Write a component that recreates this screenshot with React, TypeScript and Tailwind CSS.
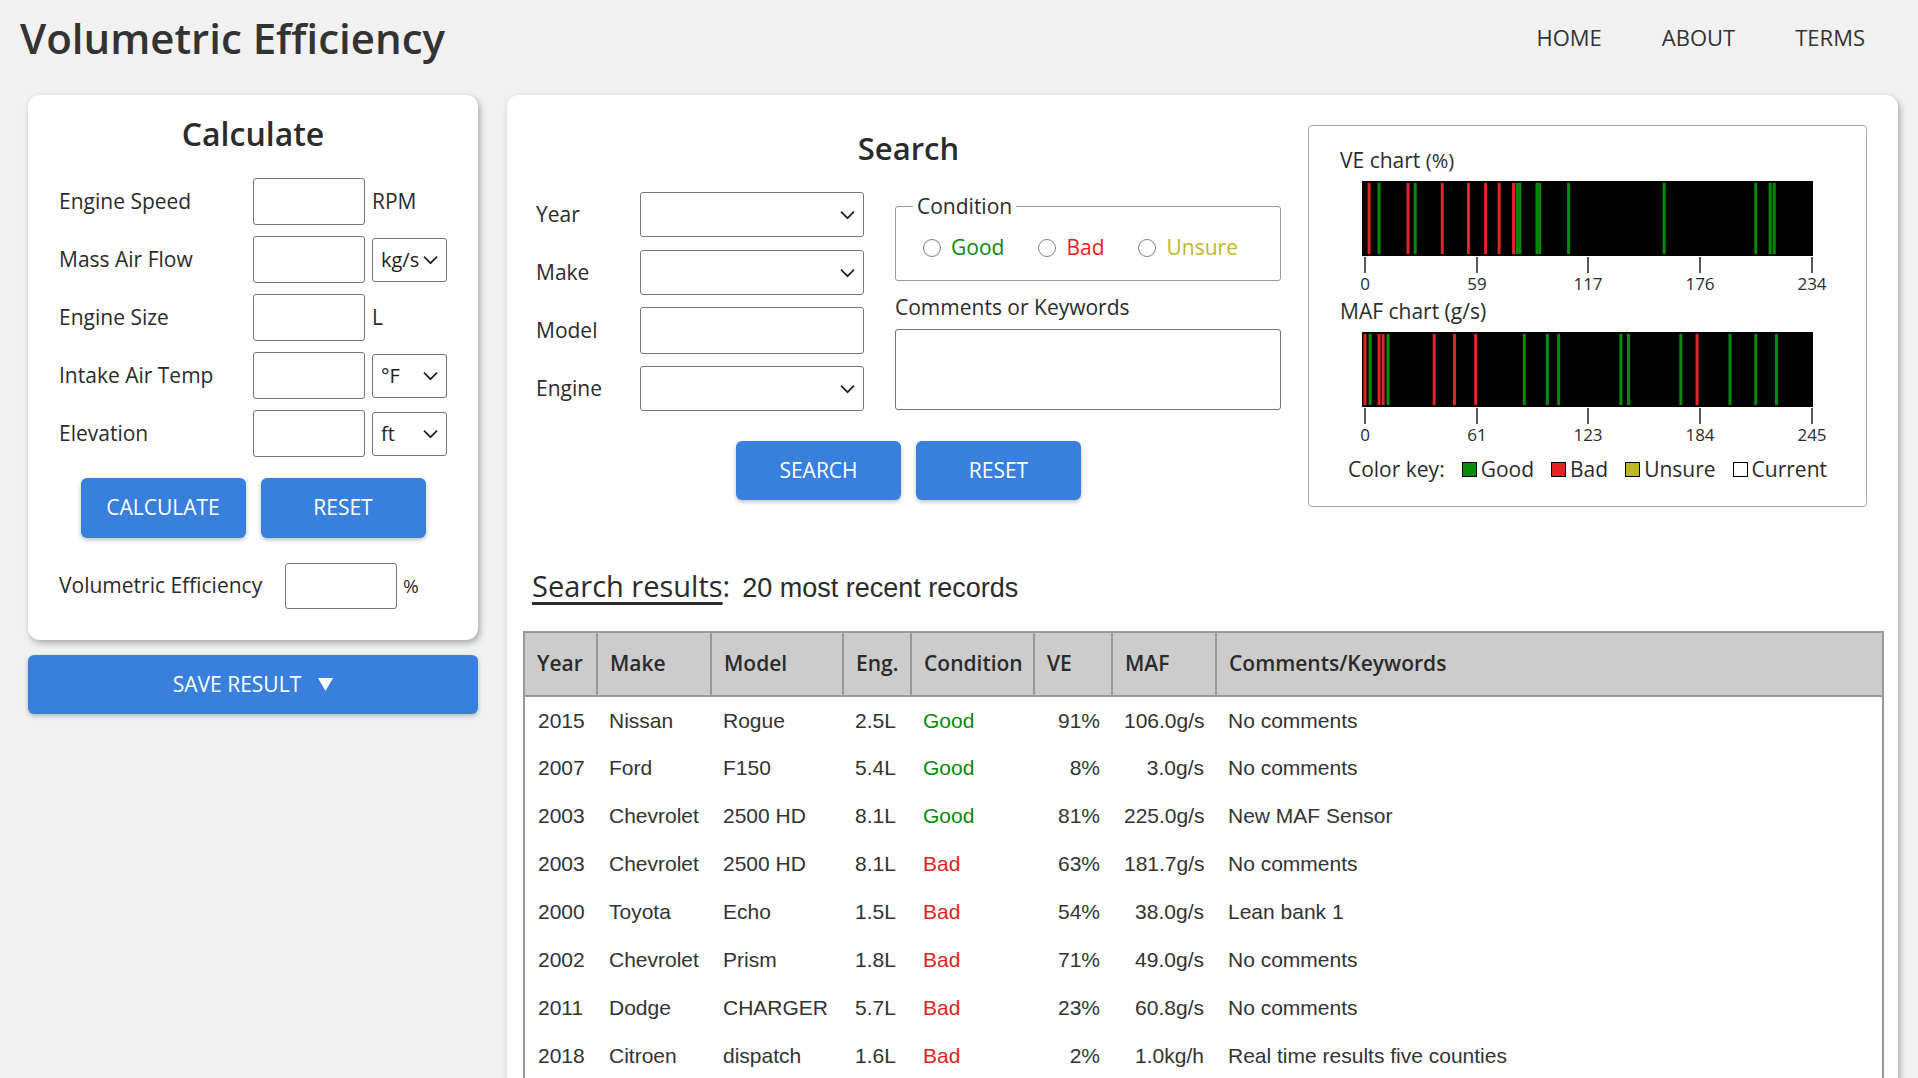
import React from "react";

const OS = "font-['Open_Sans',sans-serif]";
const AR = "font-['Liberation_Sans',Arial,sans-serif]";

const GREEN = "#0a8a0a";
const RED = "#e41e1e";

const rows = [
  ["2015", "Nissan", "Rogue", "2.5L", "Good", "91%", "106.0g/s", "No comments"],
  ["2007", "Ford", "F150", "5.4L", "Good", "8%", "3.0g/s", "No comments"],
  ["2003", "Chevrolet", "2500 HD", "8.1L", "Good", "81%", "225.0g/s", "New MAF Sensor"],
  ["2003", "Chevrolet", "2500 HD", "8.1L", "Bad", "63%", "181.7g/s", "No comments"],
  ["2000", "Toyota", "Echo", "1.5L", "Bad", "54%", "38.0g/s", "Lean bank 1"],
  ["2002", "Chevrolet", "Prism", "1.8L", "Bad", "71%", "49.0g/s", "No comments"],
  ["2011", "Dodge", "CHARGER", "5.7L", "Bad", "23%", "60.8g/s", "No comments"],
  ["2018", "Citroen", "dispatch", "1.6L", "Bad", "2%", "1.0kg/h", "Real time results five counties"],
];

type Bar = [number, "g" | "r"];

const veBars: Bar[] = [
  [0.0156, "r"], [0.0378, "g"], [0.102, "r"], [0.118, "g"], [0.178, "r"], [0.236, "r"],
  [0.274, "r"], [0.304, "r"], [0.336, "r"], [0.344, "g"], [0.35, "g"], [0.388, "g"],
  [0.394, "g"], [0.458, "g"], [0.67, "g"], [0.873, "g"], [0.905, "g"], [0.914, "g"],
];

const mafBars: Bar[] = [
  [0.0066, "r"], [0.018, "g"], [0.0378, "r"], [0.0469, "r"], [0.0576, "g"], [0.16, "r"],
  [0.205, "r"], [0.252, "r"], [0.36, "g"], [0.411, "g"], [0.436, "g"], [0.574, "g"],
  [0.591, "g"], [0.707, "g"], [0.743, "r"], [0.816, "g"], [0.873, "g"], [0.919, "g"],
];

function Chevron() {
  return (
    <svg
      width="15"
      height="9"
      viewBox="0 0 15 9"
      className="pointer-events-none absolute right-[8px] top-1/2 -translate-y-1/2"
    >
      <path d="M1 1.2l6.5 6.5 6.5-6.5" fill="none" stroke="#222" strokeWidth="1.7" />
    </svg>
  );
}

function Select({ className, value }: { className: string; value?: string }) {
  return (
    <div
      className={`relative flex items-center rounded-[3px] border border-[#767676] bg-white pl-[8px] text-[20px] text-[#222] ${className}`}
    >
      {value}
      <Chevron />
    </div>
  );
}

function Box({ className }: { className: string }) {
  return <div className={`rounded-[3px] border border-[#767676] bg-white ${className}`} />;
}

function Strip({ bars, ticks }: { bars: Bar[]; ticks: string[] }) {
  const tx = [3, 115, 226, 338, 450];
  return (
    <svg width="451" height="114" className="ml-[22px] overflow-visible">
      <rect x="0" y="0" width="451" height="75" fill="#000" />
      {bars.map(([f, c], i) => (
        <rect key={i} x={f * 451 - 1.5} y="2" width="3" height="71" fill={c === "g" ? "#078a07" : "#e42424"} />
      ))}
      {tx.map((x, i) => (
        <g key={i}>
          <line x1={x} x2={x} y1="76" y2="92" stroke="#222" strokeWidth="1.5" />
          <text x={x} y="109" textAnchor="middle" fontSize="17" fill="#2b2b2b" fontFamily="Open Sans, sans-serif">
            {ticks[i]}
          </text>
        </g>
      ))}
    </svg>
  );
}

function Key({ color, label }: { color: string; label: string }) {
  return (
    <span className="flex items-center gap-[4px]">
      <span className="h-[15px] w-[15px] border border-black" style={{ background: color }} />
      {label}
    </span>
  );
}

function Calculator() {
  const rowsCalc: [string, React.ReactNode][] = [
    ["Engine Speed", <span className="ml-[7px]">RPM</span>],
    ["Mass Air Flow", <Select className="ml-[7px] h-[44px] w-[75px]" value="kg/s" />],
    ["Engine Size", <span className="ml-[7px]">L</span>],
    ["Intake Air Temp", <Select className="ml-[7px] h-[44px] w-[75px]" value="°F" />],
    ["Elevation", <Select className="ml-[7px] h-[44px] w-[75px]" value="ft" />],
  ];
  return (
    <div className="w-[450px] shrink-0">
      <div className="rounded-[12px] bg-white px-[31px] pb-[31px] pt-[19px] shadow-[2px_3px_6px_rgba(0,0,0,0.3)]">
        <h2 className="text-center text-[32px] font-semibold leading-[40px] text-[#2b2b2b]">Calculate</h2>
        <div className="mt-[24px] flex flex-col gap-[11px]">
          {rowsCalc.map(([label, extra]) => (
            <div key={label} className="flex h-[47px] items-center text-[21px] text-[#2b2b2b]">
              <span className="w-[194px]">{label}</span>
              <Box className="h-[47px] w-[112px]" />
              {extra}
            </div>
          ))}
        </div>
        <div className="mt-[21px] flex justify-center gap-[15px]">
          {["CALCULATE", "RESET"].map((t) => (
            <button
              key={t}
              className="h-[60px] w-[165px] rounded-[6px] bg-[#3880dc] text-[21px] text-white shadow-[0_2px_4px_rgba(0,0,0,0.25)]"
            >
              {t}
            </button>
          ))}
        </div>
        <div className="mt-[25px] flex h-[46px] items-center text-[21px] text-[#2b2b2b]">
          <span className="w-[226px]">Volumetric Efficiency</span>
          <Box className="h-[46px] w-[112px]" />
          <span className="ml-[6px] text-[19px]">%</span>
        </div>
      </div>
      <button className="mt-[15px] flex h-[59px] w-full items-center justify-center gap-[17px] rounded-[6px] bg-[#3880dc] text-[21px] text-white shadow-[0_2px_4px_rgba(0,0,0,0.25)]">
        SAVE RESULT
        <svg width="15" height="13" viewBox="0 0 15 13">
          <path d="M0 0h15L7.5 13z" fill="#fff" />
        </svg>
      </button>
    </div>
  );
}

function SearchForm() {
  const left: [string, React.ReactNode][] = [
    ["Year", <Select className="h-[45px] w-[224px]" />],
    ["Make", <Select className="h-[45px] w-[224px]" />],
    ["Model", <Box className="h-[47px] w-[224px]" />],
    ["Engine", <Select className="h-[45px] w-[224px]" />],
  ];
  return (
    <div className="w-[745px] shrink-0">
      <h2 className="mt-[3px] text-center text-[31px] font-semibold leading-[40px] text-[#2b2b2b]">Search</h2>
      <div className="mt-[23px] flex gap-[31px] text-[21px] text-[#2b2b2b]">
        <div className="flex w-[328px] flex-col gap-[11px]">
          {left.map(([label, ctl]) => (
            <div key={label} className="flex h-[47px] items-center">
              <span className="w-[104px]">{label}</span>
              {ctl}
            </div>
          ))}
        </div>
        <div className="w-[386px]">
          <fieldset className="rounded-[3px] border border-[#999] pb-[19px]">
            <legend className="ml-[17px] px-[4px] leading-[30px]">Condition</legend>
            <div className="mt-[14px] flex h-[26px] items-center gap-[34px] pl-[27px]">
              {[
                ["Good", GREEN],
                ["Bad", RED],
                ["Unsure", "#c0b928"],
              ].map(([t, c]) => (
                <label key={t} className="flex items-center gap-[10px]">
                  <span className="h-[18px] w-[18px] rounded-full border-[1.5px] border-[#808080] bg-white" />
                  <span style={{ color: c }}>{t}</span>
                </label>
              ))}
            </div>
          </fieldset>
          <div className="mt-[12px] leading-[28px]">Comments or Keywords</div>
          <Box className="mt-[8px] h-[81px] w-full" />
        </div>
      </div>
      <div className="mt-[29px] flex justify-center gap-[15px]">
        {["SEARCH", "RESET"].map((t) => (
          <button
            key={t}
            className="h-[59px] w-[165px] rounded-[6px] bg-[#3880dc] text-[21px] text-white shadow-[0_2px_4px_rgba(0,0,0,0.25)]"
          >
            {t}
          </button>
        ))}
      </div>
    </div>
  );
}

function Charts() {
  return (
    <div className="h-[382px] w-[559px] shrink-0 rounded-[4px] border border-[#aaa] px-[31px] pt-[21px] text-[21px] text-[#2b2b2b]">
      <div className="leading-[26px]">
        VE chart <span className="text-[20px]">(%)</span>
      </div>
      <div className="mt-[7px]">
        <Strip bars={veBars} ticks={["0", "59", "117", "176", "234"]} />
      </div>
      <div className="mt-[3px] leading-[26px]">MAF chart (g/s)</div>
      <div className="mt-[8px]">
        <Strip bars={mafBars} ticks={["0", "61", "123", "184", "245"]} />
      </div>
      <div className="mt-[10px] flex items-center justify-center gap-[17px] leading-[26px]">
        <span>Color key:</span>
        <Key color="#078a07" label="Good" />
        <Key color="#e42424" label="Bad" />
        <Key color="#bdb81e" label="Unsure" />
        <Key color="#fff" label="Current" />
      </div>
    </div>
  );
}

function Results() {
  const heads = [
    ["Year", "w-[72px]"],
    ["Make", "w-[114px]"],
    ["Model", "w-[132px]"],
    ["Eng.", "w-[68px]"],
    ["Condition", "w-[123px]"],
    ["VE", "w-[78px]"],
    ["MAF", "w-[104px]"],
    ["Comments/Keywords", ""],
  ];
  return (
    <>
      <div className="mt-[61px] flex items-baseline pl-[25px] leading-[36px] text-[#2b2b2b]">
        <span className="text-[29px] underline decoration-[2.5px] underline-offset-[5px]">Search results</span>
        <span className="text-[29px]">:</span>
        <span className={`${AR} ml-[12px] text-[27px]`}>20 most recent records</span>
      </div>
      <div className="ml-[16px] mr-[14px] mt-[25px] border-2 border-b-0 border-[#999]">
        <table className="w-full table-fixed border-collapse">
          <thead>
            <tr className="h-[63px] bg-[#cccccc]">
              {heads.map(([h, w], i) => (
                <th
                  key={h}
                  className={`${w} border-b-2 border-[#999] px-[12px] text-left text-[21px] font-semibold text-[#2b2b2b] ${
                    i < heads.length - 1 ? "border-r-2" : ""
                  }`}
                >
                  {h}
                </th>
              ))}
            </tr>
          </thead>
          <tbody className={`${AR} text-[21px] text-[#333]`}>
            {rows.map((r, i) => (
              <tr key={i} className="h-[48px]">
                <td className="px-[13px]">{r[0]}</td>
                <td className="px-[12px]">{r[1]}</td>
                <td className="px-[12px]">{r[2]}</td>
                <td className="px-[12px]">{r[3]}</td>
                <td className="px-[12px]" style={{ color: r[4] === "Good" ? GREEN : RED }}>
                  {r[4]}
                </td>
                <td className="px-[12px] text-right">{r[5]}</td>
                <td className="px-[12px] text-right">{r[6]}</td>
                <td className="px-[12px] whitespace-nowrap">{r[7]}</td>
              </tr>
            ))}
          </tbody>
        </table>
      </div>
    </>
  );
}

export default function App() {
  return (
    <div className={`min-h-screen bg-[#f1f1f1] ${OS}`}>
      <header className="flex h-[95px] items-start justify-between">
        <h1 className="pl-[20px] pt-[12px] text-[42px] font-semibold leading-[52px] text-[#333]">
          Volumetric Efficiency
        </h1>
        <nav className="flex gap-[60px] pr-[53px] pt-[23px] text-[22px] leading-[28px] text-[#333]">
          <a>HOME</a>
          <a>ABOUT</a>
          <a>TERMS</a>
        </nav>
      </header>
      <main className="flex items-start gap-[29px] pl-[28px] pr-[20px]">
        <Calculator />
        <div className="min-h-[1100px] flex-1 rounded-[12px] bg-white pt-[30px] shadow-[2px_3px_6px_rgba(0,0,0,0.3)]">
          <div className="flex gap-[27px] pl-[29px] pr-[31px]">
            <SearchForm />
            <Charts />
          </div>
          <Results />
        </div>
      </main>
    </div>
  );
}
